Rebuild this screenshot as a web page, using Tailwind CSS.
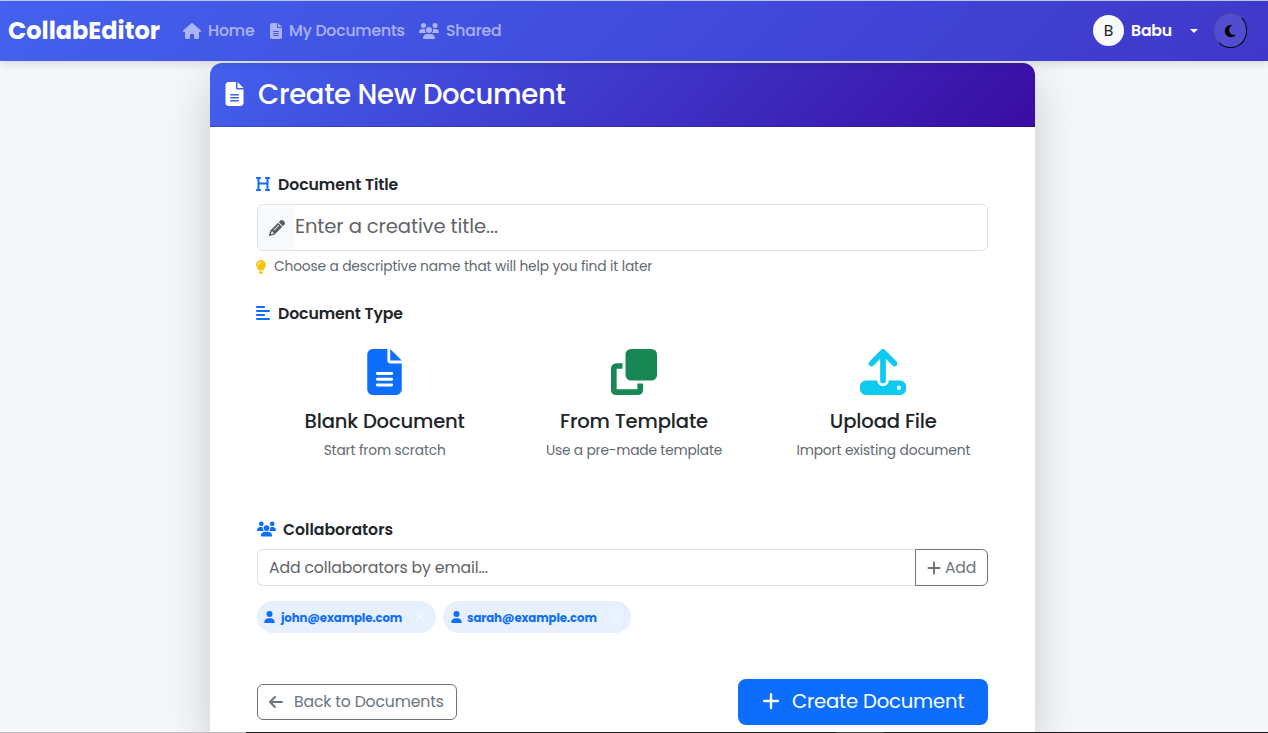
<!DOCTYPE html>
<html lang="en">
<head>
<meta charset="utf-8">
<title>Create New Document - CollabEditor</title>
<script src="https://cdn.jsdelivr.net/npm/@tailwindcss/browser@4"></script>
</head>
<body class="h-[733px] overflow-hidden bg-[#f5f7fb] font-['Poppins','Inter',sans-serif] text-[15.7px] leading-6 text-[#212529] flex flex-col items-start">

<!-- Shared icon shapes -->
<svg class="hidden">
  <symbol id="file" viewBox="0 0 384 512"><path fill-rule="evenodd" d="M64 0C28.7 0 0 28.7 0 64V448c0 35.3 28.7 64 64 64H320c35.3 0 64-28.7 64-64V160H256c-17.7 0-32-14.3-32-32V0H64zM256 0V128H384L256 0zM112 256H272c8.800 0 16 7.200 16 16s-7.200 16-16 16H112c-8.800 0-16-7.200-16-16s7.200-16 16-16zm0 64H272c8.800 0 16 7.200 16 16s-7.200 16-16 16H112c-8.800 0-16-7.200-16-16s7.200-16 16-16zm0 64H272c8.800 0 16 7.200 16 16s-7.200 16-16 16H112c-8.800 0-16-7.200-16-16s7.200-16 16-16z"/></symbol>
  <symbol id="users" viewBox="0 0 640 512"><path d="M144 0a80 80 0 1 1 0 160A80 80 0 1 1 144 0zM512 0a80 80 0 1 1 0 160A80 80 0 1 1 512 0zM0 298.700C0 239.800 47.800 192 106.700 192h42.700c15.900 0 31 3.500 44.600 9.700c-1.300 7.200-1.900 14.700-1.900 22.300c0 38.200 16.800 72.500 43.300 96H21.300C9.600 320 0 310.400 0 298.700zM405.300 320h-.7c26.600-23.500 43.300-57.800 43.300-96c0-7.600-.7-15-1.900-22.300c13.600-6.300 28.700-9.700 44.600-9.700h42.700C592.200 192 640 239.800 640 298.700c0 11.800-9.600 21.300-21.300 21.300H405.300zM224 224a96 96 0 1 1 192 0 96 96 0 1 1-192 0zM128 485.300C128 411.700 187.700 352 261.300 352H378.700C452.300 352 512 411.700 512 485.300c0 14.700-11.900 26.700-26.700 26.700H154.700c-14.700 0-26.700-11.900-26.700-26.700z"/></symbol>
  <symbol id="user" viewBox="0 0 448 512"><path d="M224 256A128 128 0 1 0 224 0a128 128 0 1 0 0 256zm-45.700 48C79.800 304 0 383.800 0 482.300C0 498.700 13.300 512 29.700 512H418.300c16.400 0 29.700-13.300 29.700-29.700C448 383.800 368.200 304 269.700 304H178.300z"/></symbol>
  <symbol id="plus" viewBox="0 0 448 512"><path d="M224 80V432M48 256H400" fill="none" stroke="currentColor" stroke-width="62" stroke-linecap="round"/></symbol>
</svg>

<nav class="relative z-10 w-full h-[61px] shrink-0 border-t border-[#b9c6f6] bg-linear-[135deg,#4361ee,#3f37c9] shadow-[0_2px_10px_rgba(0,0,0,0.14)] flex items-center pl-2 pr-[21px] font-medium text-white/55">
  <span class="w-[152px] whitespace-nowrap text-2xl font-bold text-white">CollabEditor</span>
  <svg class="ml-[23px] w-[18px] h-4 fill-current" viewBox="0 0 576 512"><path d="M575.800 255.500c0 18-15 32.100-32 32.100h-32l.7 160.200c0 2.700-.2 5.400-.5 8.100V472c0 22.100-17.900 40-40 40h-80c-22.100 0-40-17.900-40-40v-88c0-17.700-14.300-32-32-32h-64c-17.700 0-32 14.300-32 32v88c0 22.100-17.900 40-40 40h-80c-22.100 0-40-17.900-40-40V287.600H32c-18 0-32-14-32-32.100c0-9 3-17 10-24L266.400 8c7-7 15-8 22-8s15 2 21 7L564.800 231.500c8 7 12 15 11 24z"/></svg>
  <span class="ml-[7px] w-[47px] whitespace-nowrap tracking-[-0.15px]">Home</span>
  <svg class="ml-[15px] w-3 h-4 fill-current"><use href="#file"/></svg>
  <span class="ml-[7px] w-[116px] whitespace-nowrap tracking-[-0.2px]">My Documents</span>
  <svg class="ml-[14px] w-5 h-4 fill-current"><use href="#users"/></svg>
  <span class="ml-[7px] w-[56px] whitespace-nowrap tracking-[-0.2px]">Shared</span>
  <div class="ml-auto flex items-center text-white">
    <span class="mb-px size-[31px] rounded-full bg-[#f8f9fa] flex items-center justify-center font-normal text-[#212529]">B</span>
    <span class="ml-[7px] w-[41px] whitespace-nowrap font-semibold tracking-[-0.2px]">Babu</span>
    <span class="ml-[18px] border-x-4 border-x-transparent border-t-4 border-t-white"></span>
    <span class="ml-4 mb-px w-[33px] h-[35px] rounded-full border-[1.5px] border-[#5048a2] border-r-black border-b-black bg-white/10 flex items-center justify-center pr-px text-black">
      <svg class="w-3 h-[14px] fill-current" viewBox="0 0 384 512"><path d="M223.500 32C100 32 0 132.300 0 256S100 480 223.500 480c60.600 0 115.500-24.200 155.800-63.400c5-4.900 6.300-12.500 3.100-18.700s-10.100-9.700-17-8.500c-9.800 1.700-19.800 2.600-30.100 2.600c-96.900 0-175.500-78.800-175.500-176c0-65.800 36-123.100 89.300-153.300c6.100-3.500 9.200-10.500 7.700-17.300s-7.300-11.900-14.300-12.500c-6.300-.5-12.600-.8-19-.8z"/></svg>
    </span>
  </div>
</nav>

<main class="ml-[210px] mt-[2px] w-[825px] h-[669px] shrink-0 rounded-t-xl bg-white shadow-[0_16px_48px_rgba(0,0,0,0.19)]">
  <header class="h-16 rounded-t-xl border-b border-black/20 bg-linear-[135deg,#4361ee,#3a0ca3] flex items-center px-[15px] text-white">
    <svg class="mb-px w-[19px] h-6 fill-current"><use href="#file"/></svg>
    <h1 class="ml-[14px] whitespace-nowrap tracking-[-0.32px] text-[27.5px] leading-9 font-medium">Create New Document</h1>
  </header>

  <form class="px-[47px] pt-[45px] flex flex-col">
    <label class="h-6 flex items-center font-semibold">
      <svg class="-ml-px mr-2 w-[14px] h-4 fill-[#0d6efd]" viewBox="0 0 448 512"><path d="M0 64C0 46.300 14.300 32 32 32H128c17.700 0 32 14.300 32 32s-14.300 32-32 32H112V208H336V96H320c-17.700 0-32-14.300-32-32s14.300-32 32-32h96c17.700 0 32 14.300 32 32s-14.300 32-32 32H400V416h16c17.700 0 32 14.300 32 32s-14.300 32-32 32H320c-17.700 0-32-14.300-32-32s14.300-32 32-32h16V272H112V416h16c17.700 0 32 14.300 32 32s-14.300 32-32 32H32c-17.700 0-32-14.300-32-32s14.300-32 32-32H48V96H32C14.300 96 0 81.700 0 64z"/></svg>
      <span class="pt-0.5 whitespace-nowrap tracking-[-0.05px]">Document Title</span>
    </label>
    <div class="mt-2 h-[47px] rounded-md border border-[#dee2e6] overflow-hidden flex text-[#5f6368]">
      <div class="w-[37px] bg-[#f8f9fa] flex items-center pl-[11px]">
        <svg class="size-4 fill-[#595c5f]" viewBox="0 0 512 512"><path fill-rule="evenodd" d="M410.300 231l11.300-11.300-33.900-33.900-62.100-62.100L291.700 89.800l-11.300 11.300-22.600 22.600L58.600 322.900c-10.400 10.400-18 23.300-22.200 37.400L1 480.700c-2.500 8.400-.2 17.500 6.100 23.700s15.300 8.500 23.700 6.100l120.300-35.400c14.100-4.200 27-11.800 37.400-22.200L387.700 253.700 410.300 231zM160 399.400l-9.100 22.700c-4 3.100-8.500 5.400-13.300 6.900L59.400 452l23-78.100c1.400-4.900 3.800-9.400 6.900-13.300l22.700-9.100v32c0 8.800 7.200 16 16 16h32zM362.700 18.700L314.300 67.100l130.200 130 48.400-48.400c25-25 25-65.500 0-90.500L453.300 18.700c-25-25-65.500-25-90.500 0zm-47.400 168l-144 144c-6.200 6.200-16.400 6.200-22.600 0s-6.200-16.400 0-22.600l144-144c6.200-6.200 16.400-6.200 22.600 0s6.200 16.400 0 22.600z"/></svg>
      </div>
      <span class="leading-[43px] whitespace-nowrap tracking-[-0.13px] text-[19.6px]">Enter a creative title...</span>
    </div>
    <p class="mt-[5px] h-[22px] flex items-center text-[13.75px] text-[#5f6970]">
      <svg class="-ml-px mr-2 w-[10px] h-[14px] fill-[#ffc107]" viewBox="16 0 352 512"><path fill-rule="evenodd" d="M272 384c9.600-31.900 29.500-59.100 49.200-86.200c5.200-7.100 10.400-14.200 15.400-21.400c19.800-28.500 31.400-63 31.400-100.300C368 78.800 289.200 0 192 0S16 78.800 16 176c0 37.300 11.600 71.900 31.400 100.300c5 7.200 10.200 14.300 15.400 21.400c19.800 27.100 39.700 54.400 49.200 86.200H272zM192 512c44.200 0 80-35.800 80-80V416H112v16c0 44.200 35.800 80 80 80zM112 176c0 8.800-7.200 16-16 16s-16-7.200-16-16c0-61.900 50.100-112 112-112c8.800 0 16 7.200 16 16s-7.200 16-16 16c-44.200 0-80 35.800-80 80z"/></svg>
      <span class="whitespace-nowrap tracking-[-0.13px]">Choose a descriptive name that will help you find it later</span>
    </p>

    <div class="mt-[23px] h-6 flex items-center font-semibold">
      <svg class="-ml-px mr-2 w-[14px] h-4 text-[#0d6efd]" viewBox="0 0 448 512"><path d="M28 64H260M28 192H420M28 320H260M28 448H420" stroke="currentColor" stroke-width="58" stroke-linecap="round"/></svg>
      <span class="pt-0.5 whitespace-nowrap tracking-[-0.1px]">Document Type</span>
    </div>
    <div class="ml-[3px] mt-6 w-[748px] grid grid-cols-3 h-[112px] whitespace-nowrap">
      <div class="flex flex-col items-center">
        <svg class="w-[35px] h-[46px] fill-[#0d6efd]"><use href="#file"/></svg>
        <h2 class="mt-[14px] leading-6 tracking-[-0.19px] text-[19.6px] font-medium">Blank Document</h2>
        <p class="mt-[7px] tracking-[-0.14px] text-[13.75px] leading-[21px] text-[#5f6970]">Start from scratch</p>
      </div>
      <div class="flex flex-col items-center">
        <svg class="size-[46px]" viewBox="0 0 46 46"><rect x="14.500" width="31.500" height="31.500" rx="5.500" fill="#198754"/><path d="M11.500 17H5.500Q2.800 17 2.800 19.700V40.500Q2.800 43.200 5.500 43.200H26.500Q29.200 43.200 29.200 40.500V34.500" fill="none" stroke="#198754" stroke-width="5.700"/></svg>
        <h2 class="mt-[14px] leading-6 tracking-[-0.17px] text-[19.6px] font-medium">From Template</h2>
        <p class="mt-[7px] tracking-[-0.18px] text-[13.75px] leading-[21px] text-[#5f6970]">Use a pre-made template</p>
      </div>
      <div class="flex flex-col items-center">
        <svg class="size-[46px]" viewBox="0 0 46 46"><path fill="#0dcaf0" fill-rule="evenodd" d="M5.700 31.500H17.300a5.750 5.750 0 0 0 11.500 0H40.300A5.700 5.700 0 0 1 46 37.200V40.300A5.700 5.700 0 0 1 40.300 46H5.700A5.700 5.700 0 0 1 0 40.300V37.200A5.700 5.700 0 0 1 5.700 31.500zM38.900 36.600a2.150 2.150 0 1 0 0 4.300a2.150 2.150 0 1 0 0-4.300z"/><path d="M23 31.500V4M11.500 14.400L23 2.900L34.500 14.400" fill="none" stroke="#0dcaf0" stroke-width="5.700" stroke-linecap="round" stroke-linejoin="round"/></svg>
        <h2 class="mt-[14px] leading-6 tracking-[-0.16px] text-[19.6px] font-medium">Upload File</h2>
        <p class="mt-[7px] tracking-[-0.13px] text-[13.75px] leading-[21px] text-[#5f6970]">Import existing document</p>
      </div>
    </div>

    <div class="mt-[56px] h-6 flex items-center font-semibold">
      <svg class="mr-[7px] w-[19px] h-4 fill-[#0d6efd]"><use href="#users"/></svg>
      <span class="pt-0.5 whitespace-nowrap">Collaborators</span>
    </div>
    <div class="mt-2 h-[37px] flex">
      <div class="flex-1 rounded-l-md border border-r-0 border-[#dee2e6] pl-[11px] leading-[35px] tracking-[-0.13px] text-[#5f6368]">Add collaborators by email...</div>
      <div class="w-[73px] rounded-r-md border border-[#6c757d] pl-[11px] flex items-center text-[#6c757d]">
        <svg class="w-[14px] h-4"><use href="#plus"/></svg>
        <span class="ml-1 whitespace-nowrap tracking-[-0.2px]">Add</span>
      </div>
    </div>
    <div class="mt-[15px] flex gap-[7px] text-[11.75px] font-bold text-[#0d6efd]">
      <div class="w-[179px] h-8 rounded-full bg-[#e7f0ff] pl-[7px] flex items-center">
        <svg class="w-[11px] h-3 fill-current"><use href="#user"/></svg>
        <span class="ml-[6px] w-[122px] pt-0.5 whitespace-nowrap tracking-[-0.12px]">john@example.com</span>
        <svg class="ml-[12px] size-[10px]" viewBox="0 0 10 10"><path d="M1 1L9 9M9 1L1 9" stroke="#f0f6ff" stroke-width="1.500"/></svg>
      </div>
      <div class="w-[188px] h-8 rounded-full bg-[#e7f0ff] pl-2 flex items-center">
        <svg class="w-[11px] h-3 fill-current"><use href="#user"/></svg>
        <span class="ml-[5px] w-[130px] pt-0.5 whitespace-nowrap tracking-[-0.12px]">sarah@example.com</span>
        <svg class="ml-[14px] size-[10px]" viewBox="0 0 10 10"><path d="M1 1L9 9M9 1L1 9" stroke="#f0f6ff" stroke-width="1.500"/></svg>
      </div>
    </div>
    <div class="mt-[46px] flex items-center justify-between">
      <div class="w-[200px] h-9 rounded-md border border-[#6c757d] pl-[11px] flex items-center text-[#6c757d]">
        <svg class="w-[14px] h-4" viewBox="0 0 448 512"><path d="M420 256H40M190 96L32 256L190 416" fill="none" stroke="currentColor" stroke-width="62" stroke-linecap="round" stroke-linejoin="round"/></svg>
        <span class="ml-[11px] whitespace-nowrap tracking-[-0.16px]">Back to Documents</span>
      </div>
      <div class="w-[250px] h-[46px] rounded-lg bg-[#0d6efd] pl-6 pb-0.5 flex items-center text-[19.6px] text-white">
        <svg class="w-[18px] h-5"><use href="#plus"/></svg>
        <span class="ml-[12px] whitespace-nowrap tracking-[-0.19px]">Create Document</span>
      </div>
    </div>
  </form>
</main>

<!-- Window edge along the bottom -->
<footer class="relative w-full h-px shrink-0 flex bg-[#181818]"><span class="w-[246px] bg-[#bdbdbd]"></span><span class="ml-[590px] w-12 bg-[#444]"></span></footer>
</body>
</html>
